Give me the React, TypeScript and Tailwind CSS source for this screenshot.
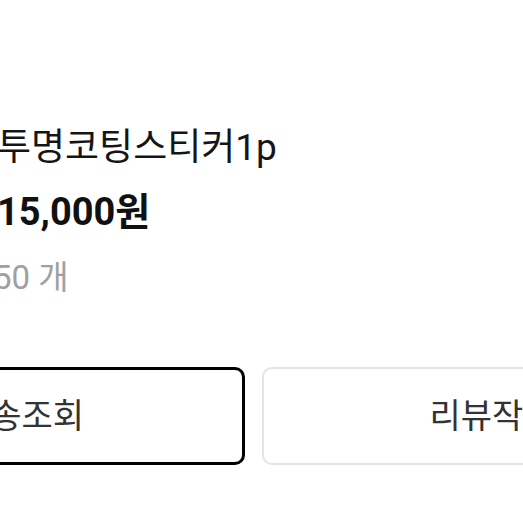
export default function App() {
  return (
    <div className="w-[523px] h-[523px] overflow-hidden bg-white font-['Roboto','Noto_Sans_CJK_KR',sans-serif]">
      <div className="pt-[128px] -ml-[3px]">
        {/* 상품 정보 */}
        <div className="text-[37px] leading-[40px] text-[#151515] whitespace-nowrap">투명코팅스티커1p</div>
        <div className="mt-[24px] text-[38px] leading-[40px] font-bold text-[#111] whitespace-nowrap">15,000원</div>
        <div className="mt-[26px] -ml-[4px] text-[33px] leading-[40px] text-[#a0a0a0] whitespace-nowrap">50 개</div>
      </div>

      {/* 하단 버튼 */}
      <div className="mt-[69px] -ml-[202px] flex gap-[17px]">
        <button className="w-[447px] h-[98px] shrink-0 rounded-[10px] border-[3px] border-black bg-white text-[34px] text-[#333] whitespace-nowrap">
          배송조회
        </button>
        <button className="w-[460px] h-[98px] shrink-0 rounded-[10px] border-2 border-[#e4e4e4] bg-white text-[34px] text-[#333] whitespace-nowrap">
          리뷰작성
        </button>
      </div>
    </div>
  );
}
